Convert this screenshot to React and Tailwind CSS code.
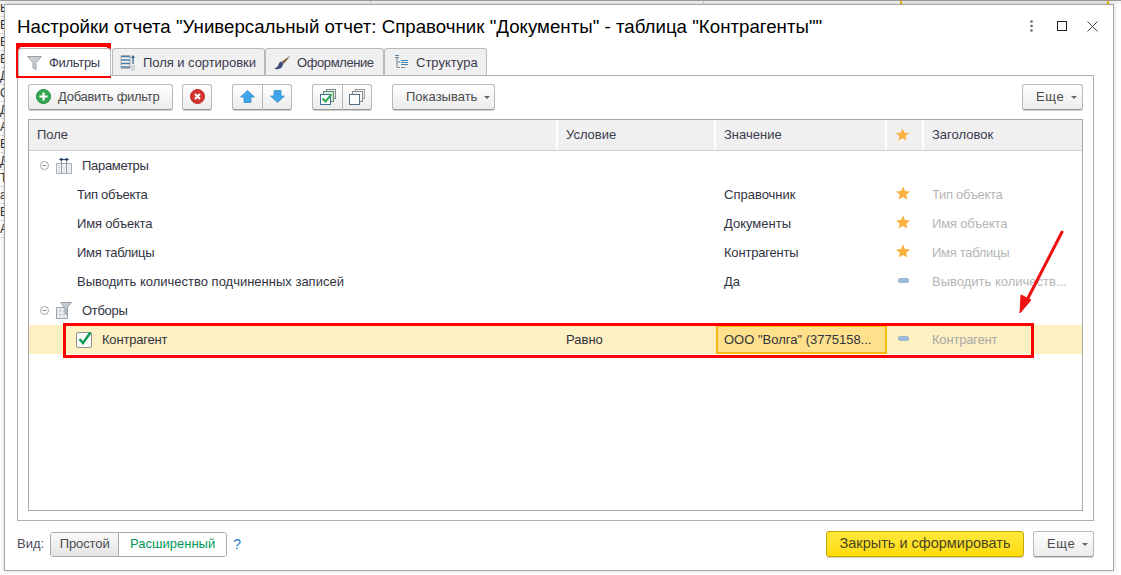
import React from "react";

const Caret = () => (
  <svg width="6" height="3" viewBox="0 0 6 3" className="ml-[7px] mt-[1px]"><path d="M0 0h6L3 3z" fill="#666666" /></svg>
);

const Star = ({ size = 14 }) => (
  <svg width={size} height={size} viewBox="0 0 16 15"><path d="M8 0l2.300 5.200 5.700.5-4.300 3.700 1.300 5.600L8 12l-5 3 1.300-5.600L0 5.700l5.700-.5z" fill="#fbb040" /></svg>
);

const Dash = () => (
  <svg width="11" height="5" viewBox="0 0 11 5"><rect x="0.500" y="0.500" width="10" height="4" rx="1.500" fill="#9dbbdc" stroke="#7f9fc4" strokeWidth="0.600" /></svg>
);

const Minus = () => (
  <svg width="9" height="9" viewBox="0 0 9 9"><circle cx="4.500" cy="4.500" r="4" fill="none" stroke="#a3a3a3" /><path d="M2.500 4.500h4" stroke="#8a8a8a" /></svg>
);

const FilterIcon = () => (
  <svg width="15" height="14" viewBox="0 0 15 14"><path d="M0.500 0.500h14L9 6.500v7l-3-1.500V6.500z" fill="#c9ced3" stroke="#9aa2aa" /></svg>
);

const FieldsIcon = () => (
  <svg width="17" height="17" viewBox="0 0 17 17" fill="none">
    <path d="M1 2.500h9M1 6h9M1 9.500h9M1 13h9" stroke="#4d7fa8" strokeWidth="1.600" />
    <path d="M1 1.500h9v13H1z" stroke="#7f8a94" strokeWidth="0.600" />
    <path d="M13 2v8" stroke="#2f5f88" strokeWidth="1.200" />
    <path d="M11 4l2-3 2 3z" fill="#2f5f88" />
    <path d="M11.500 12h3M11.500 14h3M11.500 16h3" stroke="#6f8fa8" strokeDasharray="1 1" />
  </svg>
);

const BrushIcon = () => (
  <svg width="17" height="15" viewBox="0 0 17 15">
    <path d="M16.500 0.500L8 6.500l2 2z" fill="#7a5a2e" />
    <path d="M7.500 6.500c-3 .5-2.500 3.500-4 5-1 1-2.500 1.500-3 2.500 3 .5 7 0 8-3 .5-1.500 1-2.500 1-2.500z" fill="#3f4a78" />
  </svg>
);

const StructureIcon = () => (
  <svg width="15" height="15" viewBox="0 0 15 15" fill="none">
    <path d="M1 .5h4M1 2.500h4" stroke="#5b7f9c" />
    <path d="M3 3v9.500h3M3 7h3" stroke="#7b8894" />
    <path d="M7 5.500h7M7 7.500h7M7 9.500h7" stroke="#3f87b8" strokeWidth="1.200" />
    <path d="M7 12.500h4" stroke="#7b8894" />
  </svg>
);

const AddIcon = () => (
  <svg width="15" height="15" viewBox="0 0 15 15">
    <circle cx="7.500" cy="7.500" r="7" fill="#35a853" stroke="#1f8a3e" />
    <path d="M7.500 3.500v8M3.500 7.500h8" stroke="#fff" strokeWidth="2.200" />
  </svg>
);

const DeleteIcon = () => (
  <svg width="15" height="15" viewBox="0 0 15 15">
    <circle cx="7.500" cy="7.500" r="7" fill="#d2332f" stroke="#bb2a28" />
    <path d="M5 5l5 5M10 5l-5 5" stroke="#fff" strokeWidth="2" />
  </svg>
);

const ArrowUp = () => (
  <svg width="15" height="13" viewBox="0 0 15 13"><path d="M7.500 .5L14.500 7H11v5.500H4V7H.5z" fill="#3ea5ea" stroke="#2d86c4" strokeWidth="0.700" /></svg>
);

const ArrowDown = () => (
  <svg width="15" height="13" viewBox="0 0 15 13"><path d="M7.500 12.500L14.500 6H11V.5H4V6H.5z" fill="#3ea5ea" stroke="#2d86c4" strokeWidth="0.700" /></svg>
);

const StackCheck = () => (
  <svg width="16" height="16" viewBox="0 0 16 16" fill="none">
    <rect x="6.500" y="0.500" width="9" height="9" fill="#e8f0e8" stroke="#7f8a8f" />
    <rect x="3.500" y="2.500" width="10" height="10" fill="#dcebe0" stroke="#5f8a70" />
    <rect x="0.500" y="5.500" width="10" height="10" fill="#fff" stroke="#3f6f8f" />
    <path d="M2.500 9.500l3 3 6-7" stroke="#2fa84f" strokeWidth="2" />
  </svg>
);

const Stack = () => (
  <svg width="16" height="16" viewBox="0 0 16 16" fill="none">
    <rect x="6.500" y="0.500" width="9" height="9" fill="#f2f2f2" stroke="#9a9a9a" />
    <rect x="3.500" y="2.500" width="10" height="10" fill="#f6f6f6" stroke="#8a8a8a" />
    <rect x="0.500" y="5.500" width="10" height="10" fill="#fff" stroke="#4f6f8a" />
  </svg>
);

const ParamsIcon = () => (
  <svg width="16" height="17" viewBox="0 0 16 17" fill="none">
    <path d="M.5 6.500h15v10H.5z" fill="#f3f5f6" stroke="#a6afb6" />
    <path d="M5.500 4.500v12M10.500 4.500v12" stroke="#8f9aa2" />
    <path d="M2.500 8v8M3.500 8v8M8 8v8M13 8v8" stroke="#c3cbd0" strokeDasharray="1 1" />
    <path d="M4.500 2.500h7" stroke="#24405c" strokeWidth="1.200" />
    <path d="M6 .5L3 2.500 6 4.500zM10 .5l3 2-3 2z" fill="#24405c" />
  </svg>
);

const SelectionsIcon = () => (
  <svg width="16" height="17" viewBox="0 0 16 17" fill="none">
    <path d="M.5 5.500h11v11H.5z" fill="#f2f3f4" stroke="#9aa2a8" />
    <path d="M4 5.500v11M8 5.500v11M.5 9h11M.5 12.500h11" stroke="#aab2b8" strokeDasharray="1 1" />
    <path d="M4.500 .5h11L11 6v6.500l-2-1V6z" fill="#c4cad0" stroke="#99a1a8" />
  </svg>
);

const Checkbox = () => (
  <svg width="17" height="17" viewBox="0 0 17 17" fill="none">
    <rect x="0.500" y="1.500" width="15" height="15" rx="1.500" fill="#fafafa" stroke="#8f8f8f" />
    <path d="M3.500 8l3.500 4 7.500-10.500" stroke="#0c9b55" strokeWidth="2.400" />
  </svg>
);

const Button = ({ className = "", children }) => (
  <div className={`h-[26px] pb-px flex items-center justify-center rounded-[3px] border border-[#b8b8b8] border-b-[#999999] bg-gradient-to-b from-white to-[#ececec] shadow-[0_1px_0_#cfcfcf] text-[#4b4b4b] ${className}`}>
    {children}
  </div>
);

const Tab = ({ icon, label, className }) => (
  <div className={`h-[27px] flex items-center bg-[#f0f0f0] border border-b-0 border-[#b9b9b9] rounded-t-[3px] text-[#3b3b4d] ${className}`}>
    {icon}
    {label}
  </div>
);

const HeaderCell = ({ children, className = "" }) => (
  <div className={`bg-[#f0f0f0] border-r-2 border-white flex items-center pb-[2px] pl-2 text-[#3b3b4d] ${className}`}>{children}</div>
);

const Row = ({ field, value, mark, title, fieldClass = "", valueClass = "", markClass = "" }) => (
  <div className="grid grid-cols-[529px_158px_171px_37px_1fr] h-[29px] items-center text-[#33333f]">
    <div className={`pl-[48px] ${fieldClass}`}>{field}</div>
    <div className="pl-2" />
    <div className={`pl-2 ${valueClass}`}>{value}</div>
    <div className={`flex justify-center pr-[5px] ${markClass}`}>{mark}</div>
    <div className={`pl-2 whitespace-nowrap text-[#b6b6b6] ${fieldClass}`}>{title}</div>
  </div>
);

const GroupRow = ({ icon, label }) => (
  <div className="h-[29px] flex items-center pl-[11px] text-[#33333f]">
    <Minus />
    <span className="ml-[7px] w-[16px] flex justify-center">{icon}</span>
    <span className="ml-[10px] tracking-[-0.3px]">{label}</span>
  </div>
);

const stripLetters = ["Е", "Е", "Е", "Е", "Д", "О", "Д", "А", "Е", "Д", "Т", "а", "Е", "А"];

export default function App() {
  return (
    <div className="relative w-[1121px] h-[575px] overflow-hidden bg-white text-[13px] leading-none font-['Liberation_Sans',Arial,sans-serif]">
      {/* page behind the window */}
      <div className="absolute left-0 top-0 w-[4px] h-[240px] overflow-hidden flex flex-col text-[#333333] text-[12px]">
        {stripLetters.map((l, i) => (
          <div key={i} className="h-[17px] shrink-0 border-b border-[#dddddd] flex items-center">{l}</div>
        ))}
      </div>
      <div className="absolute left-0 right-0 top-0 h-[4px] bg-[#f2f2f2] border-t border-[#9a9a9a]">
        <div className="absolute left-[370px] top-0 w-px h-[3px] bg-[#cccccc]" />
        <div className="absolute left-[703px] top-0 w-px h-[3px] bg-[#cccccc]" />
        <div className="absolute left-[900px] top-0 w-[207px] h-[3px] bg-[#e6e6e6]" />
        <div className="absolute left-[900px] top-0 w-[2px] h-[3px] bg-[#f0b400]" />
        <div className="absolute left-[1107px] top-0 w-[2px] h-[3px] bg-[#f0b400]" />
      </div>

      {/* window */}
      <div className="absolute left-[4px] top-[4px] w-[1110px] h-[567px] bg-white border border-[#a6a6a6] shadow-[0_0_4px_rgba(0,0,0,0.2)] flex flex-col pl-3 pr-[19px]">
        <div className="h-[43px] flex items-start justify-between shrink-0">
          <div className="mt-[11px] text-[18.67px] leading-[22px] text-black whitespace-nowrap tracking-[0.02px]">
            Настройки отчета "Универсальный отчет: Справочник "Документы" - таблица "Контрагенты""
          </div>
          <div className="flex items-center mt-[15px] mr-[-4px]">
            <svg width="3" height="12" viewBox="0 0 3 12" fill="#6b6b6b"><circle cx="1.500" cy="1.500" r="1.300" /><circle cx="1.500" cy="6" r="1.300" /><circle cx="1.500" cy="10.500" r="1.300" /></svg>
            <svg width="10" height="10" viewBox="0 0 10 10" className="ml-[24px]" fill="none"><rect x="0.500" y="0.500" width="9" height="9" stroke="#222222" /></svg>
            <svg width="11" height="11" viewBox="0 0 11 11" className="ml-[20px]" fill="none"><path d="M.5.5l10 10M10.500.5l-10 10" stroke="#444444" /></svg>
          </div>
        </div>

        {/* tabs */}
        <div className="flex pl-[1px] relative z-10 -mb-px shrink-0">
          <div className="h-[28px] w-[93px] flex items-center gap-[7px] pl-[8px] bg-white border border-b-0 border-[#b9b9b9] rounded-t-[3px] text-[#3b3b4d]">
            <FilterIcon />
            <span className="tracking-[-0.3px]">Фильтры</span>
          </div>
          <Tab className="w-[153px] ml-px pl-[7px]" icon={<FieldsIcon />} label={<span className="ml-[6px] tracking-[-0.05px]">Поля и сортировки</span>} />
          <Tab className="w-[119px] pl-[8px]" icon={<BrushIcon />} label={<span className="ml-[6px] tracking-[-0.4px]">Оформление</span>} />
          <Tab className="w-[103px] pl-[9px]" icon={<StructureIcon />} label={<span className="ml-[7px]">Структура</span>} />
        </div>

        {/* panel */}
        <div className="w-[1077px] h-[446px] border border-[#b0b0b0] px-[10px] pt-[8px] flex flex-col shrink-0">
          <div className="flex h-[26px] shrink-0">
            <Button className="w-[145px] !justify-start pl-[7px] gap-[7px]"><AddIcon /><span className="tracking-[-0.27px]">Добавить фильтр</span></Button>
            <Button className="w-[30px] ml-[9px]"><DeleteIcon /></Button>
            <div className="flex ml-[20px]">
              <Button className="w-[30px] rounded-r-none border-r-0"><ArrowUp /></Button>
              <Button className="w-[30px] rounded-l-none"><ArrowDown /></Button>
            </div>
            <div className="flex ml-[20px]">
              <Button className="w-[30px] rounded-r-none border-r-0"><StackCheck /></Button>
              <Button className="w-[30px] rounded-l-none"><Stack /></Button>
            </div>
            <Button className="w-[103px] ml-[20px] !justify-start pl-[13px]"><span>Показывать</span><Caret /></Button>
            <Button className="w-[61px] ml-auto !justify-start pl-[13px]"><span className="tracking-[0.6px]">Еще</span><Caret /></Button>
          </div>

          <div className="mt-[9px] h-[392px] border border-[#a8a8a8] flex flex-col shrink-0">
            <div className="grid grid-cols-[529px_158px_171px_37px_1fr] h-[31px] border-b border-[#cfcfcf] shrink-0">
              <HeaderCell>Поле</HeaderCell>
              <HeaderCell>Условие</HeaderCell>
              <HeaderCell>Значение</HeaderCell>
              <HeaderCell className="justify-center !pl-0 pr-[4px]"><Star size={13} /></HeaderCell>
              <div className="bg-[#f0f0f0] flex items-center pb-[2px] pl-2 text-[#3b3b4d]">Заголовок</div>
            </div>
            <GroupRow icon={<ParamsIcon />} label="Параметры" />
            <Row field="Тип объекта" fieldClass="tracking-[-0.3px]" value="Справочник" mark={<Star />} markClass="pb-[3px]" title="Тип объекта" />
            <Row field="Имя объекта" fieldClass="tracking-[-0.2px]" value="Документы" mark={<Star />} markClass="pb-[3px]" title="Имя объекта" />
            <Row field="Имя таблицы" fieldClass="tracking-[-0.3px]" value="Контрагенты" valueClass="tracking-[-0.2px]" mark={<Star />} markClass="pb-[3px]" title="Имя таблицы" />
            <Row field="Выводить количество подчиненных записей" value="Да" mark={<Dash />} markClass="pb-[2px]" title="Выводить количеств..." />
            <GroupRow icon={<SelectionsIcon />} label="Отборы" />
            <div className="grid grid-cols-[529px_158px_171px_37px_1fr] h-[29px] items-center bg-[#fdf0c2] text-[#33333f]">
              <div className="flex items-center pl-[47px]">
                <Checkbox />
                <span className="ml-[9px] tracking-[-0.2px]">Контрагент</span>
              </div>
              <div className="pl-2">Равно</div>
              <div className="h-[29px] pl-[6px] flex items-center bg-[#fee18a] border-2 border-[#f5b90f] whitespace-nowrap">ООО "Волга" (3775158...</div>
              <div className="flex justify-center pr-[5px] pb-[2px]"><Dash /></div>
              <div className="pl-2 text-[#a8a8a8] tracking-[-0.2px]">Контрагент</div>
            </div>
          </div>
        </div>

        {/* footer */}
        <div className="flex items-center mt-[10px] h-[26px] shrink-0">
          <span className="text-[#4b4b5a] pb-[1px]">Вид:</span>
          <div className="flex ml-[6px] h-[25px] rounded-[3px] border border-[#a8a8a8] overflow-hidden">
            <div className="w-[68px] pb-px flex items-center justify-center bg-gradient-to-b from-[#fafafa] to-[#e4e4e4] border-r border-[#a8a8a8] text-[#4b4b4b] tracking-[-0.1px]">Простой</div>
            <div className="w-[107px] pb-px flex items-center justify-center bg-white text-[#00995a]">Расширенный</div>
          </div>
          <span className="ml-[6px] text-[14px] text-[#1a7fc8] pb-[1px]">?</span>
          <div className="ml-auto flex items-center">
            <div className="w-[198px] h-[26px] pb-px flex items-center justify-center rounded-[3px] border border-[#c2a800] bg-gradient-to-b from-[#ffe83a] to-[#ffdb00] shadow-[0_1px_0_#cfcfcf] text-[#4a4520] text-[14.5px]">Закрыть и сформировать</div>
            <Button className="w-[61px] ml-[9px] !justify-start pl-[13px]"><span className="tracking-[0.6px]">Еще</span><Caret /></Button>
          </div>
        </div>
      </div>

      {/* annotations */}
      <div className="absolute left-[16px] top-[43px] w-[95px] h-[35px] border-[4px] border-[#ff0000]" />
      <div className="absolute left-[63px] top-[323px] w-[971px] h-[35px] border-[3px] border-[#ff0000]" />
      <svg className="absolute left-[1010px] top-[225px]" width="60" height="95" viewBox="0 0 60 95" fill="none">
        <path d="M52 7L17 75" stroke="#ee1111" strokeWidth="3" strokeLinecap="round" />
        <path d="M10 88L11 70 21 75z" fill="#ee1111" stroke="#ee1111" />
      </svg>
    </div>
  );
}
